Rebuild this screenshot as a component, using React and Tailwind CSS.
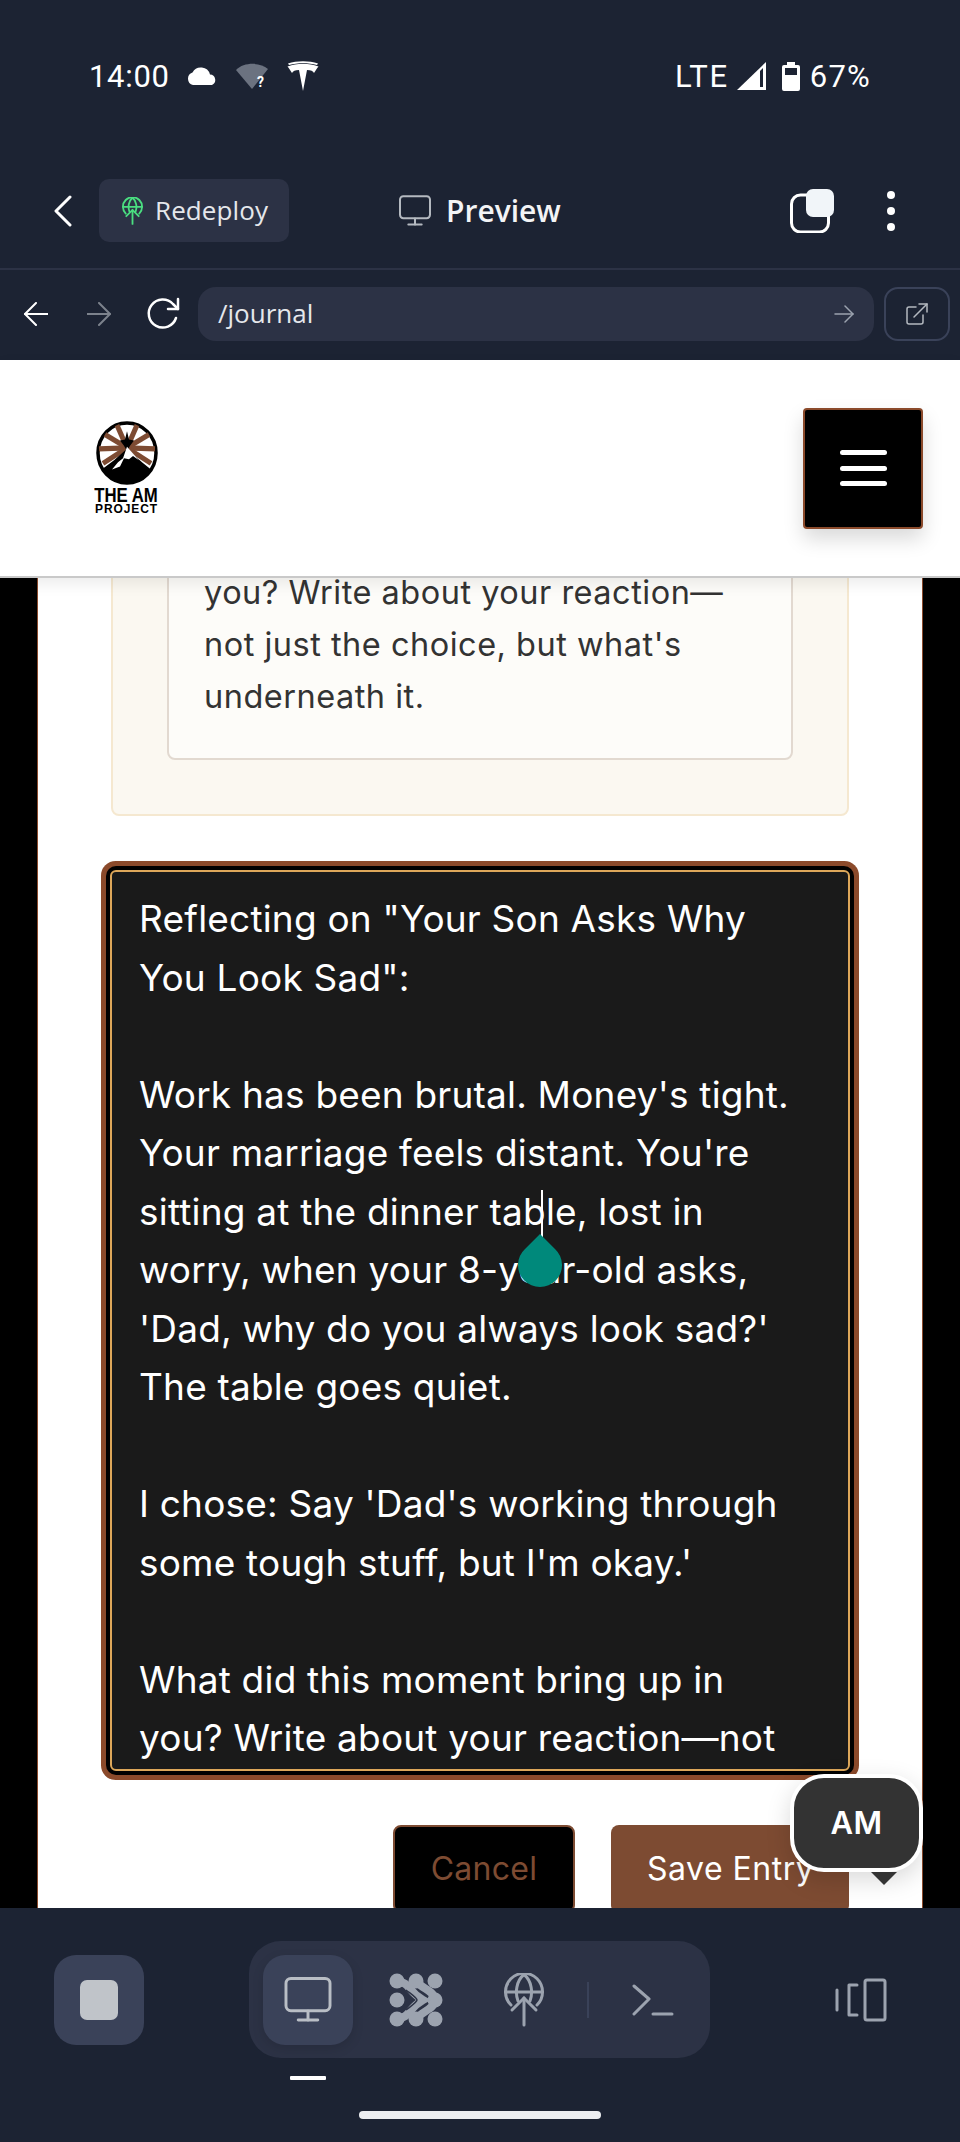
const entryLines = [
  `Reflecting on "Your Son Asks Why`,
  `You Look Sad":`,
  "",
  "Work has been brutal. Money's tight.",
  "Your marriage feels distant. You're",
  "sitting at the dinner table, lost in",
  "worry, when your 8-year-old asks,",
  "'Dad, why do you always look sad?'",
  "The table goes quiet.",
  "",
  "I chose: Say 'Dad's working through",
  "some tough stuff, but I'm okay.'",
  "",
  "What did this moment bring up in",
  "you? Write about your reaction—not",
];

const promptLines = ["you? Write about your reaction—", "not just the choice, but what's", "underneath it."];

const GlobeUp = ({ className, strokeWidth = 3 }) => (
  <svg viewBox="0 0 40 54" fill="none" stroke="currentColor" strokeWidth={strokeWidth} strokeLinecap="round" className={className}>
    <path d="M7 32A18.500 18.500 0 1 1 33 32" />
    <path d="M1.500 19H38.500" />
    <path d="M20 1.500C12 8 11 20 14 28" />
    <path d="M20 1.500C28 8 29 20 26 28" />
    <path d="M20 52V25" />
    <path d="M8 37L20 25L32 37" />
  </svg>
);

const Monitor = ({ className, strokeWidth = 2.500 }) => (
  <svg viewBox="0 0 48 46" fill="none" stroke="currentColor" strokeWidth={strokeWidth} strokeLinecap="round" strokeLinejoin="round" className={className}>
    <rect x="1.500" y="1.500" width="45" height="33" rx="5" />
    <path d="M24 35V44" />
    <path d="M14 44H34" />
  </svg>
);

const Logo = () => (
  <div className="flex flex-col items-center w-[67px]">
    <svg viewBox="0 0 62 62" preserveAspectRatio="none" className="w-[62px] h-[64px]">
      <circle cx="31" cy="31" r="29" fill="#fff" stroke="#000" strokeWidth="3.500" />
      <g stroke="#7d4b32" strokeWidth="5">
        <path d="M31 26L9 13" />
        <path d="M31 26L3 27" />
        <path d="M31 26L7 41" />
        <path d="M31 26L53 13" />
        <path d="M31 26L59 27" />
        <path d="M31 26L55 41" />
        <path d="M31 26L21 4" />
        <path d="M31 26L41 4" />
      </g>
      <path d="M31 10L33 18L38 19L34 24L31 29L28 24L24 19L29 18Z" fill="#000" />
      <path d="M31 27L46 40L55 47C50 55 41 60 31 60C20 60 11 54 7 46L18 38Z" fill="#000" />
      <path d="M31 25L43 38L37 34L33 37L28 36L24 44L16 47L22 40L27 36Z" fill="#fff" />
    </svg>
    <span className="font-['Liberation_Sans',sans-serif] font-bold text-[19.500px] leading-[15px] mt-[3px] text-black whitespace-nowrap scale-x-[0.86]">THE AM</span>
    <span className="font-['Liberation_Sans',sans-serif] font-bold text-[12px] leading-[9px] mt-[2px] tracking-[0.9px] text-black whitespace-nowrap">PROJECT</span>
  </div>
);

export default function App() {
  return (
    <div className="relative w-[960px] h-[2142px] overflow-hidden flex flex-col bg-[#1c2333] font-['Inter',sans-serif]">
      {/* ---- top phone + app chrome ---- */}
      <div className="h-[360px] shrink-0 flex flex-col bg-[#1c2333] text-white">
        {/* status bar */}
        <div className="h-[46px] mt-[53px] pl-[89px] pr-[89px] flex items-center justify-between font-['Roboto',sans-serif]">
          <div className="flex items-center">
            <span className="text-[31px] tracking-[0.7px] leading-none w-[97px]">14:00</span>
            <svg viewBox="0 0 32 18" className="w-[32px] h-[18px] fill-white">
              <path d="M7 18A6.500 6.500 0 0 1 6.500 5.500A9.500 9.500 0 0 1 24 7.500A5.500 5.500 0 0 1 26 18Z" />
            </svg>
            <svg viewBox="0 0 33 26" className="w-[33px] h-[26px] ml-[18px] overflow-visible">
              <path d="M0 7C8 -1 24 -1 32 6L16 26Z" fill="#6b7280" />
              <text x="21" y="24" fontSize="14" fontWeight="700" fill="#fff" fontFamily="Roboto">?</text>
            </svg>
            <svg viewBox="0 0 32 30" className="w-[32px] h-[30px] ml-[18px] fill-white">
              <path d="M16 30L12 9C8 9 6 10 5 12C3 9 2 7 0.500 5.500C6 3.500 10 3 16 3C22 3 26 3.500 31.500 5.500C30 7 29 9 27 12C26 10 24 9 20 9Z" />
              <path d="M1 2.500C10 -0.500 22 -0.500 31 2.500L30 4C22 1.500 10 1.500 2 4Z" />
            </svg>
          </div>
          <div className="flex items-center">
            <span className="text-[31px] tracking-[1.700px] leading-none">LTE</span>
            <svg viewBox="0 0 29 28" className="w-[29px] h-[28px] ml-[8px]">
              <path d="M0 28L29 0V28Z" fill="#fff" />
              <path d="M23 9V25H26V6Z" fill="#1c2333" />
            </svg>
            <svg viewBox="0 0 18 29" className="w-[18px] h-[29px] ml-[16px]">
              <path d="M5 0H13V3H16A2 2 0 0 1 18 5V27A2 2 0 0 1 16 29H2A2 2 0 0 1 0 27V5A2 2 0 0 1 2 3H5Z" fill="#fff" />
              <rect x="3" y="6" width="12" height="7" fill="#1c2333" />
            </svg>
            <span className="text-[31px] tracking-[1.200px] leading-none ml-[10px]">67%</span>
          </div>
        </div>

        {/* app title row */}
        <div className="relative flex items-center h-[63px] mt-[80px]">
          <svg viewBox="0 0 18 32" fill="none" stroke="white" strokeWidth="3" strokeLinecap="round" strokeLinejoin="round" className="w-[18px] h-[32px] ml-[54px]">
            <path d="M16 2L2 16L16 30" />
          </svg>
          <div className="ml-[27px] w-[190px] h-[63px] rounded-[10px] bg-[#2c3245] flex items-center pl-[23px]">
            <GlobeUp className="w-[21px] h-[28px] text-[#4ade80]" strokeWidth={3.500} />
            <span className="ml-[12px] text-[26px] tracking-[0.1px] font-['Open_Sans',sans-serif] text-[#e5e7eb]">Redeploy</span>
          </div>
          <Monitor className="w-[32px] h-[31px] ml-[110px] text-[#b4b9c0]" strokeWidth={3} />
          <span className="ml-[15px] text-[30px] font-semibold font-['Open_Sans',sans-serif] text-[#f3f4f6]">Preview</span>
          <svg viewBox="0 0 44 44" className="w-[44px] h-[44px] ml-[229px]">
            <rect x="1.500" y="6" width="37" height="37" rx="9" fill="none" stroke="white" strokeWidth="3" />
            <rect x="16" y="0" width="28" height="28" rx="7" fill="#f1f5f9" />
          </svg>
          <div className="ml-[53px] flex flex-col gap-[8px]">
            <span className="w-[8px] h-[8px] rounded-full bg-white" />
            <span className="w-[8px] h-[8px] rounded-full bg-white" />
            <span className="w-[8px] h-[8px] rounded-full bg-white" />
          </div>
        </div>

        <div className="h-[2px] mt-[26px] bg-[#2c3245]" />

        {/* browser row */}
        <div className="flex items-center h-[54px] mt-[17px]">
          <svg viewBox="0 0 24 24" fill="none" stroke="white" strokeWidth="2" strokeLinecap="round" strokeLinejoin="round" className="w-[24px] h-[24px] ml-[24px]">
            <path d="M24 12H1" />
            <path d="M12 1L1 12L12 23" />
          </svg>
          <svg viewBox="0 0 24 24" fill="none" stroke="#7c828c" strokeWidth="2" strokeLinecap="round" strokeLinejoin="round" className="w-[24px] h-[24px] ml-[39px]">
            <path d="M0 12H23" />
            <path d="M12 1L23 12L12 23" />
          </svg>
          <svg viewBox="0 0 34 34" fill="none" stroke="white" strokeWidth="2.500" strokeLinecap="round" strokeLinejoin="round" className="w-[34px] h-[34px] ml-[35px]">
            <path d="M30 21A14 14 0 1 1 27 7L32 12" />
            <path d="M32 2V12H22" />
          </svg>
          <div className="ml-[18px] w-[676px] h-[54px] rounded-[18px] bg-[#2c3245] flex items-center justify-between pl-[20px] pr-[20px]">
            <span className="text-[26px] leading-[34px] pb-[2px] font-['Open_Sans',sans-serif] text-[#e5e7eb]">/journal</span>
            <svg viewBox="0 0 20 20" fill="none" stroke="#9ca3af" strokeWidth="1.500" strokeLinecap="round" strokeLinejoin="round" className="w-[20px] h-[20px]">
              <path d="M1 10H19" />
              <path d="M11 2L19 10L11 18" />
            </svg>
          </div>
          <div className="ml-[10px] w-[66px] h-[54px] rounded-[14px] border-2 border-[#3a4259] flex items-center justify-center">
            <svg viewBox="0 0 24 24" fill="none" stroke="#b4b9c0" strokeWidth="1.500" strokeLinecap="round" strokeLinejoin="round" className="w-[24px] h-[24px]">
              <path d="M11 5H4A2 2 0 0 0 2 7V20A2 2 0 0 0 4 22H16A2 2 0 0 0 18 20V13" />
              <path d="M9 15L22 2" />
              <path d="M14 2H22V10" />
            </svg>
          </div>
        </div>
      </div>

      {/* ---- site header ---- */}
      <div className="relative z-10 h-[218px] shrink-0 bg-white border-b-2 border-[#c9c9c9] shadow-[0_6px_14px_rgba(0,0,0,0.08)] flex items-start justify-between pl-[93px] pr-[37px]">
        <div className="mt-[61px]">
          <Logo />
        </div>
        <button className="mt-[48px] w-[120px] h-[121px] rounded-[4px] bg-black border-2 border-[#8b4a2b] shadow-[0_10px_20px_rgba(0,0,0,0.15)] flex flex-col items-center gap-[10.500px] pt-[40px]">
          <span className="w-[47px] h-[5px] rounded-full bg-white" />
          <span className="w-[47px] h-[5px] rounded-full bg-white" />
          <span className="w-[47px] h-[5px] rounded-full bg-white" />
        </button>
      </div>

      {/* ---- scrolled page ---- */}
      <div className="flex-1 min-h-0 overflow-hidden bg-black px-[37px]">
        <div className="h-full overflow-hidden bg-white border-x border-[#8b4a2b] px-[73px] font-['Inter',sans-serif]">
          <div className="-mt-[91px] bg-[#fbf8f1] border-2 border-[#f5e8d0] rounded-[8px] px-[54px] pt-[38px] pb-[54px]">
            <div className="bg-[#fdfcf9] border-2 border-[#e2d9d0] rounded-[8px] pl-[35px] pt-[38px] pb-[35px]">
              {promptLines.map((line) => (
                <div key={line} className="text-[#333333] text-[32.500px] leading-[52px] tracking-[0.5px] whitespace-nowrap">
                  {line}
                </div>
              ))}
            </div>
          </div>

          <div className="mt-[54px] -mx-px h-[901px] overflow-hidden rounded-[6px] bg-[#1a1a1a] border-2 border-[#dda75a] shadow-[0_0_0_4px_#000,0_0_0_9px_#8b4a2b] pl-[27px] pt-[18px]">
            {entryLines.map((line, i) => (
              <div key={i} className="h-[58.500px] text-white text-[37px] leading-[58.500px] tracking-[0.2px] whitespace-nowrap">
                {line}
              </div>
            ))}
          </div>

          <div className="mt-[54px] flex justify-end gap-[36px]">
            <button className="w-[182px] h-[88px] rounded-[8px] bg-black border-2 border-[#7d4b32] text-[#7d4b32] text-[32px] tracking-[0.3px]">
              Cancel
            </button>
            <button className="w-[238px] h-[88px] rounded-[8px] bg-[#7d4b32] text-white text-[32px] tracking-[0.5px] text-left pl-[36px] whitespace-nowrap">
              Save Entry
            </button>
          </div>
        </div>
      </div>

      {/* ---- bottom app bar ---- */}
      <div className="relative z-10 h-[234px] shrink-0 bg-[#1c2333]">
        <div className="flex items-center h-[117px] mt-[33px]">
          <div className="ml-[54px] w-[90px] h-[90px] rounded-[22px] bg-[#3a4259] flex items-center justify-center">
            <div className="w-[38px] h-[40px] rounded-[7px] bg-[#c0c4c9]" />
          </div>
          <div className="ml-[105px] w-[461px] h-[117px] rounded-[32px] bg-[#2c3245] flex items-center pl-[14px]">
            <div className="w-[90px] h-[90px] rounded-[22px] bg-[#3a4259] shadow-[0_4px_12px_rgba(0,0,0,0.12)] flex items-center justify-center">
              <Monitor className="w-[48px] h-[45px] text-[#b9bec5]" strokeWidth={3} />
            </div>
            <svg viewBox="0 0 54 54" className="w-[54px] h-[54px] ml-[36px]">
              <g fill="#9ca3af">
                <circle cx="8" cy="8" r="7.500" />
                <circle cx="27" cy="8" r="7.500" />
                <circle cx="46" cy="8" r="7.500" />
                <circle cx="8" cy="27" r="7.500" />
                <circle cx="46" cy="27" r="7.500" />
                <circle cx="8" cy="46" r="7.500" />
                <circle cx="27" cy="46" r="7.500" />
                <circle cx="46" cy="46" r="7.500" />
              </g>
              <path d="M8 8C22 10 18 18 34 27C18 36 22 44 8 46" fill="none" stroke="#9ca3af" strokeWidth="8" />
              <path d="M27 8C33 16 46 18 46 27C46 36 33 38 27 46" fill="none" stroke="#9ca3af" strokeWidth="8" />
              <path d="M17 17C22 21 28 25 28 27C28 29 22 33 17 37" fill="none" stroke="#2c3245" strokeWidth="1.500" />
            </svg>
            <GlobeUp className="w-[40px] h-[54px] ml-[61px] text-[#9ca3af]" />
            <div className="w-[2px] h-[36px] bg-[#3a4259] ml-[43px]" />
            <svg viewBox="0 0 42 32" fill="none" stroke="#9ca3af" strokeWidth="3" strokeLinecap="round" strokeLinejoin="round" className="w-[42px] h-[32px] ml-[43px]">
              <path d="M2 2L17 15L2 30" />
              <path d="M21 30H40" />
            </svg>
          </div>
          <svg viewBox="0 0 52 44" fill="none" stroke="#9ca3af" strokeWidth="3" strokeLinecap="round" strokeLinejoin="round" className="w-[52px] h-[44px] ml-[125px]">
            <rect x="30" y="2" width="20" height="40" rx="2" />
            <path d="M22 7H14V37H22" />
            <path d="M2 12V32" />
          </svg>
        </div>
        <div className="w-[36px] h-[4px] rounded-[1px] bg-white ml-[290px] mt-[18px]" />
        <div className="w-[242px] h-[8px] rounded-full bg-[#eceef1] mx-auto mt-[31px]" />
      </div>

      {/* ---- overlays ---- */}
      <div className="absolute z-20 left-[790px] top-[1774px] w-[133px] h-[98px] rounded-[34px] bg-[#333333] border-4 border-white shadow-[0_8px_24px_rgba(0,0,0,0.15)] flex items-center justify-center text-white text-[31px] tracking-[0.5px] font-semibold">
        AM
      </div>
      <svg viewBox="0 0 26 13" className="absolute z-20 left-[871px] top-[1872px] w-[26px] h-[13px] fill-[#333333]">
        <path d="M0 0H26L13 13Z" />
      </svg>
      <div className="absolute z-20 left-[541px] top-[1190px] w-[2px] h-[54px] bg-white" />
      <svg viewBox="0 0 44 54" className="absolute z-20 left-[518px] top-[1234px] w-[44px] h-[54px] fill-[#00897b]">
        <path d="M22 0L37 15A22 22 0 1 1 7 15Z" />
      </svg>
    </div>
  );
}
